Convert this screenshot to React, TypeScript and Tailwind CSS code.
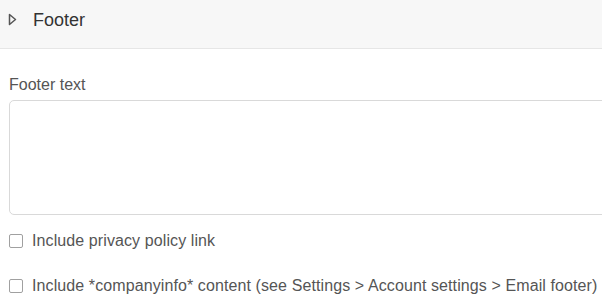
import { useState } from "react";

// ── Collapsible footer settings section ──────────────────────────────────────

function Caret() {
  return (
    <svg width="9" height="13" viewBox="0 0 9 13" className="shrink-0">
      <path d="M1.5 1.5 L7.5 6.5 L1.5 11.5 Z" fill="none" stroke="#555" strokeWidth="1.5" strokeLinejoin="round" />
    </svg>
  );
}

function CheckRow({ label }: { label: string }) {
  const [checked, setChecked] = useState(false);
  return (
    <label className="flex items-center gap-[9px] text-[16px] leading-[18px] tracking-[0.1px] text-[#555] cursor-pointer">
      <input
        type="checkbox"
        checked={checked}
        onChange={(e) => setChecked(e.target.checked)}
        className="appearance-none shrink-0 w-[14px] h-[14px] border border-[#a0a0a0] rounded-[2px] bg-white checked:bg-[#1a73e8]"
      />
      {label}
    </label>
  );
}

export default function App() {
  const [text, setText] = useState("");

  return (
    <div className="w-[602px] h-[304px] bg-white overflow-hidden font-['Liberation_Sans',Arial,sans-serif]">
      {/* Header */}
      <div className="h-[49px] bg-[#f7f7f7] border-b border-[#e6e6e6] flex items-center gap-[16px] pl-[8px] pb-[9px]">
        <Caret />
        <span className="text-[18px] leading-[20px] text-[#333]">Footer</span>
      </div>

      {/* Body */}
      <div className="pl-[9px] pt-[27px]">
        <p className="text-[16px] text-[#555] leading-[18px]">Footer text</p>
        <textarea
          value={text}
          onChange={(e) => setText(e.target.value)}
          className="block mt-[6px] w-[620px] h-[115px] border border-[#d9d9d9] rounded-[5px] resize-none outline-none p-2"
        />
        <div className="mt-[17px] flex flex-col gap-[27px]">
          <CheckRow label="Include privacy policy link" />
          <CheckRow label="Include *companyinfo* content (see Settings > Account settings > Email footer)" />
        </div>
      </div>
    </div>
  );
}
